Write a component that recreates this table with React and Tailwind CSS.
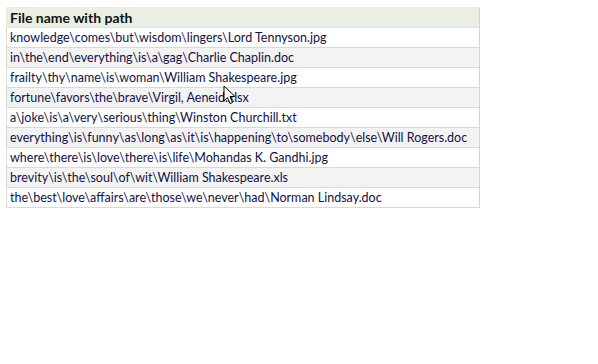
import React from "react";

const rows = [
  "knowledge\\comes\\but\\wisdom\\lingers\\Lord Tennyson.jpg",
  "in\\the\\end\\everything\\is\\a\\gag\\Charlie Chaplin.doc",
  "frailty\\thy\\name\\is\\woman\\William Shakespeare.jpg",
  "fortune\\favors\\the\\brave\\Virgil, Aeneid.xlsx",
  "a\\joke\\is\\a\\very\\serious\\thing\\Winston Churchill.txt",
  "everything\\is\\funny\\as\\long\\as\\it\\is\\happening\\to\\somebody\\else\\Will Rogers.doc",
  "where\\there\\is\\love\\there\\is\\life\\Mohandas K. Gandhi.jpg",
  "brevity\\is\\the\\soul\\of\\wit\\William Shakespeare.xls",
  "the\\best\\love\\affairs\\are\\those\\we\\never\\had\\Norman Lindsay.doc",
];

const Cursor = () => (
  <svg className="absolute left-[223px] top-[85px]" width="14" height="20" viewBox="0 0 14 20">
    <path d="M1 1 L1 16 L4.5 12.5 L7 18.5 L9.5 17.5 L7 11.5 L12 11.5 Z" fill="#fff" stroke="#000" strokeWidth="1" strokeLinejoin="round" />
  </svg>
);

const App = () => {
  return (
    <div className="relative w-[598px] h-[364px] bg-white" style={{ fontFamily: "Lato, 'Noto Sans', sans-serif" }}>
      <div className="pt-[7px] pl-[6px]">
        <div className="w-[474px] border-r border-[#d4d4d4]">
          <div className="h-[21px] bg-[#e9efe3] border-b border-[#dfe8d4] pl-[4px] flex items-center text-[14px] font-bold text-[#111111]">
            File name with path
          </div>
          {rows.map((r, i) => (
            <div
              key={i}
              className={`h-[20px] border-b border-l border-[#d9d9d9] pl-[3px] pt-[1px] flex items-center text-[12.5px] text-[#12123f] whitespace-nowrap ${i % 2 ? "bg-[#f3f3f3]" : "bg-white"}`}
            >
              {r}
            </div>
          ))}
        </div>
      </div>
      <Cursor />
    </div>
  );
};

export default App;
